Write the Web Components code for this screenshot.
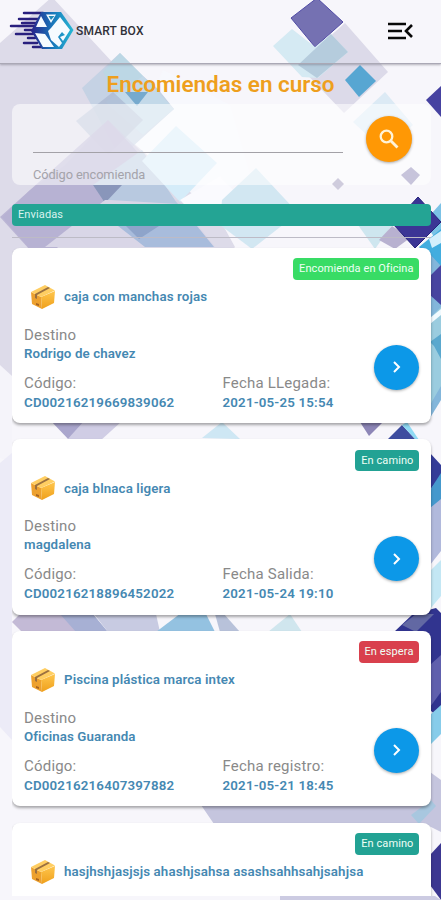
<!DOCTYPE html>
<html lang="es"><head><meta charset="utf-8"><title>Smart Box</title>
<style>html,body{margin:0;height:900px;overflow:hidden;background:#f7f6fb}body{font-family:Roboto,sans-serif}</style></head>
<body>
<smart-page>
  <app-header slot="header"></app-header>
  <search-panel></search-panel>
  <section-bar>Enviadas</section-bar>
  <package-list>
    <package-card color="#38dc65" ls=".08" badge="Encomienda en Oficina" name="caja con manchas rojas" to="Rodrigo de chavez" code="CD00216219669839062" label="Fecha LLegada:" date="2021-05-25 15:54"></package-card>
    <package-card color="#22a294" ls=".1" badge="En camino" name="caja blnaca ligera" to="magdalena" code="CD00216218896452022" label="Fecha Salida:" date="2021-05-24 19:10"></package-card>
    <package-card color="#d9404d" ls=".1" badge="En espera" name="Piscina plástica marca intex" to="Oficinas Guaranda" code="CD00216216407397882" label="Fecha registro:" date="2021-05-21 18:45"></package-card>
    <package-card color="#22a294" ls=".1" badge="En camino" name="hasjhshjasjsjs ahashjsahsa asashsahhsahjsahjsa" to="" code="" label="" date=""></package-card>
  </package-list>
</smart-page>
<script>
const define=(tag,html)=>customElements.define(tag,class extends HTMLElement{
  constructor(){super();this.attachShadow({mode:'open'}).innerHTML=typeof html==='function'?html(this):html}
});

define('geo-backdrop',`<style>:host{display:block;position:absolute;inset:0;z-index:-1}svg{display:block}</style>
<svg width="441" height="900" viewBox="0 0 441 900">
<rect width="441" height="900" fill="#f7f6fb"/>
<path d="M52-3 0 43V380L14 375 80 425 235 247 163 117Z" fill="#dddbe9"/>
<path d="M0 365 12 376V462L0 458Z" fill="#f5f4fa"/><path d="M0 463 12 453V740L0 727Z" fill="#ecebf7"/>
<path d="M163 70 230 105 250 175 205 205 130 140Z" fill="#f7f8fd"/>
<path d="M120 53 143 76 158 89 174 109 120 158 82 88Z" fill="#c5d2e4"/>
<path d="M120 53 143 76 120 99 103 72Z" fill="#b9d8e5" opacity=".8"/>
<path d="M143 76 174 109 143 135 105 102Z" fill="#c3d9e9"/>
<path d="M113 92 143 120 108 155 76 121Z" fill="#a9b6d0" opacity=".7"/>
<path d="M125 92 148 92 137 106Z" fill="#76aace"/>
<path d="M108 120 145 160 55 250H30L0 217Z" fill="#b3acd0" opacity=".8"/>
<path d="M65 165 108 120 146 156 65 247H28L2 217 30 190Z" fill="#b3add0" opacity=".45"/>
<path d="M93 185 142 150 178 205 141 239Z" fill="#b8c9e0"/>
<path d="M93 185 122 185 105 203Z" fill="#8996ba"/>
<path d="M142 161 176 126 217 163 180 202Z" fill="#d5ecf9"/>
<path d="M105 200 178 200 215 247H45Z" fill="#d9d6e7"/>
<path d="M110 200 130 185H162L178 204Z" fill="#b8c9e0"/>
<path d="M118 226H197L214 247H145Z" fill="#a8bcdc"/><path d="M126 226H159L139 239Z" fill="#8ea4ca"/>
<path d="M180 200 220 176 250 208 205 226Z" fill="#fafafe"/>
<path d="M222 200 256 168 298 213 252 249 220 225Z" fill="#d2e7f2"/>
<path d="M317-2 343 22 315 47 291 18Z" fill="#7571b2" stroke="#514ca5" stroke-width="1"/>
<path d="M345 23 388 72 344 113 298 65Z" fill="#dcdae9"/>
<path d="M292 29 315 47 331 34 348 52 318 78 302 77 273 46Z" fill="#d5eaf3"/>
<path d="M298 65 331 34 348 52 317 78Z" fill="#b5ccdd"/>
<path d="M360 65 376 81 359 97 345 80Z" fill="#57a6d2"/>
<path d="M385 92 413 125 384 151 353 122Z" fill="#dceaf5"/>
<path d="M441 86 426 100 441 117Z" fill="#4642a1"/>
<path d="M358 225 392 225 375 249Z" fill="#cee6ef"/>
<path d="M392 226 410 238 395 249 379 240Z" fill="#b8b1d0"/>
<path d="M441 203 424 222 441 247Z" fill="#7bc2e6"/>
<path d="M418 197 441 222 415 248 393 224Z" fill="#3b3595" stroke="#24207a"/>
<path d="M419 247 441 229V270Z" fill="#42addf"/><path d="M429 239 441 231V243L432 248Z" fill="#d4effc"/>
<path d="M428 252 441 266V400L430 418Z" fill="#83b6db"/><path d="M430 276 441 265V305L430 295Z" fill="#4845a0"/>
<path d="M430 318 441 307V386L430 405Z" fill="#9accdf"/><path d="M430 342 441 334V359L434 346Z" fill="#5aa8ce"/>
<path d="M430 318 441 309V315L430 324Z" fill="#f1faff"/>
<path d="M50 420 70 441 105 420Z" fill="#aaa6cd"/><path d="M84 421H122L100 441H66Z" fill="#d0cde5"/>
<path d="M202 438 222 422 240 439Z" fill="#cee7f4"/>
<path d="M360 422H383L369 436Z" fill="#8d86b7"/><path d="M387 440 402 425 416 440Z" fill="#3e4d9f"/>
<path d="M402 425 407 422 419 440H416Z" fill="#8fdaf4"/>
<path d="M430 453 441 465V476L430 490Z" fill="#343c98"/><path d="M430 490 441 473V503L430 508Z" fill="#4599cd"/>
<path d="M430 508 441 499V551L430 565Z" fill="#b1b9dc"/><path d="M430 571 441 560V596L430 609Z" fill="#c3e7f4"/>
<path d="M12 622 23 611H62L85 631H21Z" fill="#c3bad6"/><path d="M60 614H93L108 632H76Z" fill="#a7b0d4"/>
<path d="M94 614 156 614 160 632H108Z" fill="#c8cbe2"/><path d="M156 632 181 613 206 614 215 632Z" fill="#94c2e1"/>
<path d="M215 614 224 614 240 632H220Z" fill="#b8c2da"/><path d="M268 632 290 614 302 632Z" fill="#d0e6ee"/>
<path d="M394 632 413 614 436 608 441 613V720L430 710V645Z" fill="#31348f"/><path d="M402 625 416 614 434 614 416 632Z" fill="#6268a3"/>
<path d="M430 665 441 655V692L430 707Z" fill="#6060ad"/><path d="M430 715 441 705V734L430 745Z" fill="#87ccea"/>
<path d="M201 805H430V772L441 780V832L425 824H214Z" fill="#c5c5de"/><path d="M411 815 431 800 436 806 419 824Z" fill="#a8c7df"/>
<path d="M430 855 441 843V900L430 885Z" fill="#3c3791"/><path d="M280 896H435L441 900H280Z" fill="#cccbe2"/>
</svg>`);

define('app-logo',`<style>:host{display:flex;align-items:center;color:#303038;font:500 12px Roboto,sans-serif;letter-spacing:.15px}svg{display:block}span{margin-left:2px;padding-top:2px}</style>
<svg width="65" height="40" viewBox="0 0 65 40"><defs><linearGradient id="g"><stop stop-color="#28228a"/><stop offset=".5" stop-color="#1976ba"/><stop offset="1" stop-color="#25b8d4"/></linearGradient></defs>
<path d="M15 3H34M10 9H32M2 16H27M13 13H28M7 24H24M16 20H26M15 33H28M19 28H26M24 37H36" stroke="#29207e" stroke-width="2.5" stroke-linecap="round"/>
<path d="M32 2H52L64.5 20 53 39H33L22 21Z" fill="url(#g)"/>
<path d="M32 6 38 17H27Z M37 4.5H47L42 13Z M26 23 36 24 45 37H34Z M42 18 51 7 61 20 54 31 51 27 56 25 53 22 49 27 53 33 50 37 42 30 39 21Z" fill="#f5fbff"/><path d="m39.5 6 2.5 4 3.5-4Z" fill="#238bb9"/></svg><span>SMART BOX</span>`);

define('app-header',`<style>:host{display:flex;box-sizing:border-box;height:64px;padding:10px 27px 14px 9px;align-items:center;justify-content:space-between;border-bottom:1px solid #aaa8b5;box-shadow:0 1px 2px #77748388}svg{margin-top:3px}</style>
<app-logo></app-logo><svg width="27" height="20" viewBox="0 0 27 20"><path d="M1 3H19M1 10H15M1 17H19M25 4 19 10 25 16" fill="none" stroke="#080808" stroke-width="2.6"/></svg>`);

define('smart-page',`<style>:host{display:flex;flex-direction:column;position:relative;isolation:isolate;width:441px;height:900px;overflow:hidden}h1{margin:0;padding-top:6px;height:34px;line-height:28px;text-align:center;font-size:22.5px;font-weight:600;color:#ee9f1d;letter-spacing:-.03px}main{display:flex;flex-direction:column;padding:0 10.5px 4px 12px;flex:1;min-height:0}</style>
<geo-backdrop></geo-backdrop><slot name="header"></slot><h1>Encomiendas en curso</h1><main><slot></slot></main>`);

define('search-panel',`<style>:host{display:flex;flex:none;justify-content:space-between;box-sizing:border-box;height:81px;padding:12px 19px 0 21px;border-radius:8px;background:#ffffff8c;position:relative}
.field{width:310px}.line{height:36px;border-bottom:1px solid #a3a1a7}label{display:block;margin-top:13px;font-size:12.8px;line-height:17px;color:#a4a3aa;letter-spacing:-.1px}
button{border:0;padding:0;width:46px;height:46px;border-radius:50%;background:#ff9805;box-shadow:0 1px 3px #0005;display:grid;place-items:center}.dots{position:absolute;left:315px;top:60px}</style>
<svg class="dots" width="100" height="30" viewBox="0 0 100 30"><path d="m84 3 9 8-9 10-10-10Z" fill="#c7c4db"/><path d="m11 14 6 6-6 6-6-6Z" fill="#cfccdd"/></svg>
<div class="field"><div class="line"></div><label>Código encomienda</label></div><button aria-label="Buscar"><svg width="20" height="20" viewBox="0 0 20 20" fill="none" stroke="#fff3d8" stroke-width="2.3"><circle cx="7.5" cy="7.5" r="5.8"/><path d="m12 12 6.5 6.5" stroke-width="2.8"/></svg></button>`);

define('section-bar',`<style>:host{display:block;flex:none;margin-top:19px;padding-bottom:11px;border-bottom:1px solid #bdbbc6;color:#d9f3ef;font-size:11px;line-height:22px}div{height:22px;background:#24a494;border-radius:4px;padding-left:6px;letter-spacing:.12px}</style><div><slot></slot></div>`);
define('package-list',`<style>:host{display:flex;flex-direction:column;gap:16.2px;padding-top:9.5px;min-height:0;overflow:hidden;margin-right:-4px;padding-right:4px}</style><slot></slot>`);
define('box-icon',`<style>:host,svg{display:block}</style><svg width="26" height="26" viewBox="0 0 26 26"><defs><linearGradient id="f" x2="0" y2="1"><stop stop-color="#ffc64d"/><stop offset="1" stop-color="#efa01c"/></linearGradient></defs><path d="M1 8 11 13 12 25 2 20Z" fill="#eda12f"/><path d="M11 13 25 7 24 19 12 25Z" fill="url(#f)"/><path d="M1 8 15 1 25 6.5 11 13Z" fill="#ffce62"/><path d="M5 10 18 3 20 4 7 11V15L5 14Z" fill="#9b7040"/><path d="m6 19 3 1v2l-3-1Z" fill="#a96521"/></svg>`);
define('status-badge',`<style>:host{display:block;padding:0 5px 0 6px;height:21.5px;line-height:21px;border-radius:4px;font-size:11px;color:#effff5}</style><slot></slot>`);
define('go-button',`<style>:host{display:grid;place-items:center;width:45px;height:45px;border-radius:50%;background:#0c98e8;box-shadow:0 1px 3px #0005}</style><svg width="10" height="14" viewBox="0 0 10 14"><path d="m2 2 5 5-5 5" fill="none" stroke="#fff" stroke-width="2"/></svg>`);

define('package-card',el=>{const a=n=>el.getAttribute(n);return `<style>
:host{display:flex;flex:none;flex-direction:column;box-sizing:border-box;height:175.5px;padding:10.5px 12px 0;border-radius:8px;background:#fff;box-shadow:0 2px 3px #0005}
.status{display:flex;justify-content:flex-end}.name{display:flex;align-items:center;height:26px;gap:8px;margin:4px 0 0 6px}
b{display:block;font-size:13.3px;line-height:17px;font-weight:600;color:#4588b2;white-space:nowrap;letter-spacing:.1px}.name b{letter-spacing:.13px}
.info{display:grid;grid-template-columns:198.5px 151.5px 45px;margin-top:16px}.wide{grid-column:1/3}small{display:block;font-size:15px;line-height:19px;color:#898989;letter-spacing:.2px;white-space:nowrap}
.cell{margin-top:12px}.cell b{margin-top:1px;letter-spacing:.2px}go-button{grid-column:3;grid-row:1/3;margin-top:19px}</style>
<div class="status"><status-badge style="background:${a('color')};letter-spacing:${a('ls')}px">${a('badge')}</status-badge></div>
<div class="name"><box-icon></box-icon><b>${a('name')}</b></div>
${a('to')?`<div class="info"><div class="wide"><small>Destino</small><b>${a('to')}</b></div><div class="cell"><small>Código:</small><b>${a('code')}</b></div><div class="cell"><small>${a('label')}</small><b>${a('date')}</b></div><go-button></go-button></div>`:''}`});
</script></body></html>
